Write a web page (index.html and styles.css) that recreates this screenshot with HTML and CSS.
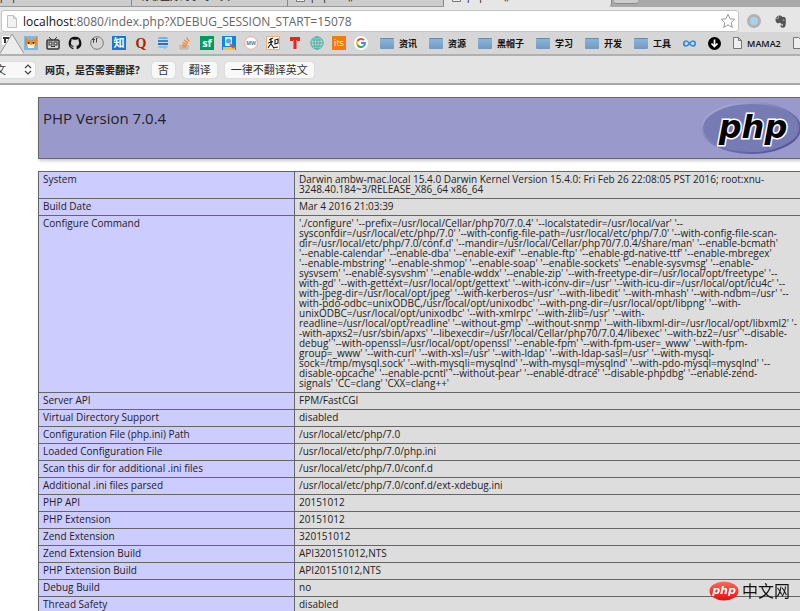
FILE: index.html
```html
<!doctype html>
<html lang="zh-CN">
<head>
    <meta charset="UTF-8">
    <meta name="viewport" content="width=device-width, initial-scale=1.0">
    <title>phpinfo()</title>
    <link rel="stylesheet" href="styles.css">
</head>
<body>
    <div class="browser">
        <div class="tabs">
            <div class="tab tab--first"><span>php</span></div>
            <div class="tab"><span>有哪些好的学习工具</span></div>
            <div class="tab">
                <svg width="9" height="12" viewBox="0 0 9 12"><path d="M.5.5h5l3 3v8h-8z" fill="#eee" stroke="#777"/></svg>
                <span>phpinfo()</span>
            </div>
            <div class="tab tab--active">
                <svg width="9" height="12" viewBox="0 0 9 12"><path d="M.5.5h5l3 3v8h-8z" fill="#eee" stroke="#777"/></svg>
                <span>phpinfo()</span>
            </div>
            <div class="tab--new"></div>
        </div>

        <div class="toolbar">
            <form class="address" action="">
                <svg width="10" height="13" viewBox="0 0 10 13"><path d="M.5.5h6l3 3v9h-9z" fill="#f2f2f2" stroke="#c0c0c0"/><path d="M6.500.5v3h3" fill="none" stroke="#c0c0c0"/></svg>
                <label for="url">localhost</label>
                <input type="text" id="url" value=":8080/index.php?XDEBUG_SESSION_START=15078">
                <svg width="16" height="16" viewBox="0 0 16 16"><path d="M8 1.300l2 4.500 4.900.5-3.700 3.300 1.100 4.800L8 11.900l-4.300 2.500 1.100-4.800L1.100 6.300 6 5.800z" fill="#fff" stroke="#999"/></svg>
            </form>
            <svg width="14" height="14" viewBox="0 0 14 14"><circle cx="7" cy="7" r="5.500" fill="#a4d3ee" stroke="#b2b2b2" stroke-width="3"/></svg>
            <svg width="12" height="13" viewBox="0 0 12 13"><path d="M3.500.5v3h-3C.3 5 .8 7.500 2 8c1.500.5 2.600.4 3-.5.3 1 1 1.300 2.300 1.400.7.3.7 1.100.7 1.800H6.500c0-.8.5-1 1-1-1.200-.5-2.200.3-2 1.600.2 1.100 1 1.400 2.300 1.400 2.200 0 2.700-1.200 2.900-3.500.3-2.700.3-5.200-.3-6.500C10 2 8.500 1.900 7.200 1.700 6.500.6 4.500.2 3.500.5z" fill="#555"/><path d="M.6 3L3 .8V3z" fill="#555"/><path d="M7.800 5.400c.7-.5 1.400-.3 1.500.3" fill="none" stroke="#ddd" stroke-width=".8"/></svg>
        </div>

        <div class="bookmarks">
            <div class="bookmarks__icons">
                <svg viewBox="0 0 14 14"><rect width="14" height="14" fill="#78b9e8"/><path d="M1 1l4 3h4l4-3v7l-3 4H4L1 8z" fill="#e98b2c"/><path d="M3 7l4 2 4-2-1 5H4z" fill="#fff3dd"/><circle cx="4.500" cy="7" r="1" fill="#333"/><circle cx="9.500" cy="7" r="1" fill="#333"/></svg>
                <svg viewBox="0 0 14 14" fill="none" stroke="#333"><rect x="1" y="4" width="12" height="9" rx="1" stroke-width="1.500"/><path d="M3 1l3 3M11 1L8 4M5 10.500h4"/><rect x="3" y="6" width="3" height="3"/><rect x="8" y="6" width="3" height="3"/></svg>
                <svg viewBox="0 0 16 16"><path d="M8 .8a7.300 7.300 0 0 0-2.300 14.200c.4.1.5-.2.5-.4v-1.300c-2 .4-2.500-.9-2.500-.9-.3-.8-.8-1.100-.8-1.100-.7-.4 0-.4 0-.4.7 0 1.100.7 1.100.7.700 1.100 1.700.8 2.200.6 0-.5.2-.8.4-1-1.600-.2-3.300-.8-3.300-3.600 0-.8.3-1.500.8-2-.1-.2-.4-1 0-2 0 0 .7-.2 2.100.8a7 7 0 0 1 3.700 0c1.400-1 2.100-.8 2.100-.8.4 1 .1 1.800 0 2 .5.5.8 1.200.8 2 0 2.800-1.700 3.400-3.300 3.600.2.200.4.700.4 1.400v2c0 .2.1.5.5.4A7.300 7.300 0 0 0 8 .8z" fill="#111"/></svg>
                <svg viewBox="0 0 14 14" fill="none" stroke="#777"><circle cx="7" cy="7" r="6.300"/><path d="M2 3.500h3M3.500 2v5M6 2.500h1.500M6.500 2.500v4" stroke="#444"/></svg>
                <svg viewBox="0 0 14 14"><rect width="14" height="14" fill="#1478d8"/><text x="7" y="11" font-size="11" font-weight="700" text-anchor="middle" fill="#fff">知</text></svg>
                <svg viewBox="0 0 14 14"><text class="quora" x="7" y="12" font-size="14" font-weight="700" text-anchor="middle" fill="#a82400">Q</text></svg>
                <svg viewBox="0 0 14 14"><path d="M2 3q0-2 2-2h6q2 0 2 2z" fill="#6fb4e4"/><path d="M2 4h10v2H2z" fill="#3a86cc"/><path d="M2 7h10v2H2z" fill="#2a6fb8"/><path d="M2 10h10q0 2-2 2l-2 2v-2H4q-2 0-2-2z" fill="#92bde0"/></svg>
                <svg viewBox="0 0 14 14" fill="none"><path d="M2 9v4h8V9" stroke="#aaa"/><path d="M3.500 11h5M3.700 9l5 .6M4.500 6.500l4.600 1.800M6 4l4 3M8.500 1.500l2.800 4.200" stroke="#f08a3c" stroke-width="1.300"/></svg>
                <svg viewBox="0 0 14 14"><rect width="14" height="14" fill="#009a61"/><text x="7" y="11" font-size="11" font-weight="700" text-anchor="middle" fill="#fff">sf</text></svg>
                <svg viewBox="0 0 14 14"><rect width="14" height="14" fill="#1383e0"/><path d="M1 14v-3h12v3z" fill="#f3c62b"/><rect x="3" y="1" width="7" height="9" fill="#d9f0ff"/><circle cx="6.500" cy="5" r="2.500" fill="#4aa8ee"/><path d="M8 8l4 4" fill="none" stroke="#e24b36" stroke-width="2"/></svg>
                <svg viewBox="0 0 14 14"><circle cx="7" cy="7" r="6.300" fill="#fff" stroke="#ecaaa6"/><text x="7" y="9" font-size="5" font-weight="700" text-anchor="middle" fill="#58789c">MW</text></svg>
                <svg viewBox="0 0 14 14"><rect x=".5" y=".5" width="13" height="13" fill="#fff" stroke="#f0ad7c"/><path d="M3 4l4-2M5 2v5M2 7l5-1.500M2 12l4-6M5 8l3 4M9 4l3-1v4l-3 1zM7 12l5-1" fill="none" stroke="#222" stroke-width="1.200"/></svg>
                <svg viewBox="0 0 14 14"><path d="M2 1h10v4H9V4H8.500v9h-3V4H5v1H2z" fill="#e8251c"/></svg>
                <svg viewBox="0 0 14 14" fill="none" stroke="#3fb0a0"><circle cx="7" cy="7" r="6.200"/><ellipse cx="7" cy="7" rx="3" ry="6.200"/><path d="M7 1v12M1 7h12M2 4h10M2 10h10"/></svg>
                <svg viewBox="0 0 14 14"><rect width="14" height="14" fill="#ee7d0e"/><text x="7" y="10" font-size="9" text-anchor="middle" fill="#fff">its</text></svg>
                <svg viewBox="0 0 14 14" fill="none" stroke-width="1.900"><circle cx="7" cy="7" r="7" fill="#fff"/><path d="M10 4.200A4 4 0 0 0 3.500 5" stroke="#ea4335"/><path d="M3.500 5a4 4 0 0 0 0 4" stroke="#fbbc05"/><path d="M3.500 9a4 4 0 0 0 6 1.200" stroke="#34a853"/><path d="M9.500 10.200A4 4 0 0 0 11 7H7" stroke="#4285f4"/></svg>
            </div>
            <a class="bookmark" href="#"><i class="folder"></i>资讯</a>
            <a class="bookmark" href="#"><i class="folder"></i>资源</a>
            <a class="bookmark" href="#"><i class="folder"></i>黑帽子</a>
            <a class="bookmark" href="#"><i class="folder"></i>学习</a>
            <a class="bookmark" href="#"><i class="folder"></i>开发</a>
            <a class="bookmark" href="#"><i class="folder"></i>工具</a>
            <svg width="13" height="13" viewBox="0 0 13 13" fill="none" stroke="#3b8ad4" stroke-width="1.700"><path d="M6.500 6.500C5 4.500 4.300 4 3.300 4a2.500 2.500 0 0 0 0 5c1 0 1.700-.5 3.200-2.500S8.700 4 9.700 4a2.500 2.500 0 0 1 0 5c-1 0-1.700-.5-3.200-2.500z"/></svg>
            <svg width="13" height="13" viewBox="0 0 13 13"><circle cx="6.500" cy="6.500" r="6.500" fill="#000"/><path d="M6.500 2.500v7M3.500 6.500l3 3 3-3" fill="none" stroke="#fff" stroke-width="1.700"/></svg>
            <a class="bookmark" href="#"><svg width="9" height="12" viewBox="0 0 9 12"><path d="M.5.5h5l3 3v8h-8zM5.500.5v3h3" fill="#eee" stroke="#777"/></svg>MAMA2</a>
            <svg width="9" height="12" viewBox="0 0 9 12"><path d="M.5.5h5l3 3v8h-8z" fill="#eee" stroke="#777"/></svg>
            <svg class="notch" width="24" height="22" viewBox="0 0 24 22"><path d="M2 3h9v9H2z" fill="#fff"/><path d="M3 5h7M5 5v5" stroke="#333" stroke-width="2"/><path d="M0 21L12 1l12 20v1H0z" fill="#ececec"/><path d="M0 20.500L12 1l12 19.500" fill="none" stroke="#999"/></svg>
        </div>

        <form class="translate" action="">
            <div class="translate__lang">
                <select aria-label="语言"><option>英文</option></select>
                <svg width="8" height="11" viewBox="0 0 8 11"><path d="M1 4l3-3 3 3M1 7l3 3 3-3" fill="none" stroke="#444" stroke-width="1.200"/></svg>
            </div>
            <strong>网页，是否需要翻译?</strong>
            <button type="button">否</button>
            <button type="button">翻译</button>
            <button type="button">一律不翻译英文</button>
        </form>
    </div>

    <main class="phpinfo">
        <header class="version">
            <h1>PHP Version 7.0.4</h1>
            <svg class="version__logo" width="102" height="54" viewBox="0 0 102 54">
                <defs>
                    <linearGradient id="rim" x1="0" y1="0" x2="1" y2="1">
                        <stop offset="0" stop-color="#b4b6da"/>
                        <stop offset=".5" stop-color="#777bb3"/>
                        <stop offset="1" stop-color="#44478c"/>
                    </linearGradient>
                </defs>
                <ellipse cx="51" cy="27" rx="49" ry="25" fill="#777bb3" stroke="url(#rim)" stroke-width="2"/>
                <text x="53" y="37" text-anchor="middle">php</text>
            </svg>
        </header>

        <table>
            <tr><th>System</th><td>Darwin ambw-mac.local 15.4.0 Darwin Kernel Version 15.4.0: Fri Feb 26 22:08:05 PST 2016; root:xnu-<br>3248.40.184~3/RELEASE_X86_64 x86_64</td></tr>
            <tr><th>Build Date</th><td>Mar 4 2016 21:03:39</td></tr>
            <tr><th>Configure Command</th><td>'./configure' '--prefix=/usr/local/Cellar/php70/7.0.4' '--localstatedir=/usr/local/var' '--<br>
                sysconfdir=/usr/local/etc/php/7.0' '--with-config-file-path=/usr/local/etc/php/7.0' '--with-config-file-scan-<br>
                dir=/usr/local/etc/php/7.0/conf.d' '--mandir=/usr/local/Cellar/php70/7.0.4/share/man' '--enable-bcmath'<br>
                '--enable-calendar' '--enable-dba' '--enable-exif' '--enable-ftp' '--enable-gd-native-ttf' '--enable-mbregex'<br>
                '--enable-mbstring' '--enable-shmop' '--enable-soap' '--enable-sockets' '--enable-sysvmsg' '--enable-<br>
                sysvsem' '--enable-sysvshm' '--enable-wddx' '--enable-zip' '--with-freetype-dir=/usr/local/opt/freetype' '--<br>
                with-gd' '--with-gettext=/usr/local/opt/gettext' '--with-iconv-dir=/usr' '--with-icu-dir=/usr/local/opt/icu4c' '--<br>
                with-jpeg-dir=/usr/local/opt/jpeg' '--with-kerberos=/usr' '--with-libedit' '--with-mhash' '--with-ndbm=/usr' '--<br>
                with-pdo-odbc=unixODBC,/usr/local/opt/unixodbc' '--with-png-dir=/usr/local/opt/libpng' '--with-<br>
                unixODBC=/usr/local/opt/unixodbc' '--with-xmlrpc' '--with-zlib=/usr' '--with-<br>
                readline=/usr/local/opt/readline' '--without-gmp' '--without-snmp' '--with-libxml-dir=/usr/local/opt/libxml2' '-<br>
                -with-apxs2=/usr/sbin/apxs' '--libexecdir=/usr/local/Cellar/php70/7.0.4/libexec' '--with-bz2=/usr' '--disable-<br>
                debug' '--with-openssl=/usr/local/opt/openssl' '--enable-fpm' '--with-fpm-user=_www' '--with-fpm-<br>
                group=_www' '--with-curl' '--with-xsl=/usr' '--with-ldap' '--with-ldap-sasl=/usr' '--with-mysql-<br>
                sock=/tmp/mysql.sock' '--with-mysqli=mysqlnd' '--with-mysql=mysqlnd' '--with-pdo-mysql=mysqlnd' '--<br>
                disable-opcache' '--enable-pcntl' '--without-pear' '--enable-dtrace' '--disable-phpdbg' '--enable-zend-<br>
                signals' 'CC=clang' 'CXX=clang++'</td></tr>
            <tr><th>Server API</th><td>FPM/FastCGI</td></tr>
            <tr><th>Virtual Directory Support</th><td>disabled</td></tr>
            <tr><th>Configuration File (php.ini) Path</th><td>/usr/local/etc/php/7.0</td></tr>
            <tr><th>Loaded Configuration File</th><td>/usr/local/etc/php/7.0/php.ini</td></tr>
            <tr><th>Scan this dir for additional .ini files</th><td>/usr/local/etc/php/7.0/conf.d</td></tr>
            <tr><th>Additional .ini files parsed</th><td>/usr/local/etc/php/7.0/conf.d/ext-xdebug.ini</td></tr>
            <tr><th>PHP API</th><td>20151012</td></tr>
            <tr><th>PHP Extension</th><td>20151012</td></tr>
            <tr><th>Zend Extension</th><td>320151012</td></tr>
            <tr><th>Zend Extension Build</th><td>API320151012,NTS</td></tr>
            <tr><th>PHP Extension Build</th><td>API20151012,NTS</td></tr>
            <tr><th>Debug Build</th><td>no</td></tr>
            <tr><th>Thread Safety</th><td>disabled</td></tr>
        </table>
    </main>

    <div class="watermark">
        <svg width="30" height="20" viewBox="0 0 30 20">
            <defs>
                <linearGradient id="red" x1="0" y1="0" x2="0" y2="1">
                    <stop offset="0" stop-color="#ff6a5c"/>
                    <stop offset="1" stop-color="#e80d0d"/>
                </linearGradient>
            </defs>
            <ellipse cx="15" cy="10" rx="14.500" ry="9.500" fill="url(#red)"/>
            <text x="15" y="13" text-anchor="middle">php</text>
        </svg>
        <span>中文网</span>
    </div>
</body>
</html>
```
FILE: styles.css
```css
body {
    margin: 0;
    height: 100vh;
    overflow: hidden;
    background-color: #fff;
    color: #222;
    font-family: "Open Sans", "Noto Sans CJK SC", sans-serif;
}

svg {
    display: block;
    flex-shrink: 0;
}

/* browser */
.browser {
    background-color: #dcdcdc;
    border-bottom: 2px solid #a9a9a9;
}

.tabs {
    display: flex;
    height: 7px;
    background-color: #a9a9a9;
    overflow: hidden;
}

.tab {
    display: flex;
    align-items: flex-end;
    gap: 6px;
    box-sizing: border-box;
    width: 156px;
    padding: 0 0 4px 8px;
    background-color: #cdcdcd;
    border-right: 1px solid #888;
    border-bottom: 1px solid #999;
    font-size: 10px;
    line-height: 12px;
    white-space: nowrap;
}

.tab--first {
    width: 132px;
    padding-left: 0;
}

.tab--active {
    width: 168px;
    background-color: #e6e6e6;
    border-bottom-color: #e6e6e6;
    border-bottom-right-radius: 4px;
}

.tab--new {
    width: 24px;
    height: 3px;
    margin-left: 2px;
    background-color: #cdcdcd;
    border-bottom: 1px solid #888;
    border-radius: 0 0 3px 3px;
}

.toolbar {
    display: flex;
    align-items: center;
    gap: 14px;
    padding: 3px 13px 0 1px;
    background-color: #e6e6e6;
}

.address {
    display: flex;
    flex: 1;
    align-items: center;
    box-sizing: border-box;
    height: 22px;
    margin-right: -6px;
    padding: 0 2px 0 5px;
    background-color: #fff;
    border: 1px solid #c4c4c4;
    border-radius: 3px;
    font-size: 12px;
}

.address label {
    margin-left: 6px;
    color: #111;
}

.address input {
    flex: 1;
    min-width: 0;
    padding: 0;
    border: 0;
    outline: 0;
    background: none;
    color: #666;
    font: inherit;
}

.bookmarks {
    position: relative;
    display: flex;
    align-items: center;
    height: 22px;
    gap: 12px;
    padding-left: 24px;
    background-color: #d6d6d6;
    border-bottom: 2px solid #b0b0b0;
    font-size: 9px;
    white-space: nowrap;
    overflow: hidden;
}

.bookmarks__icons {
    display: flex;
    flex-shrink: 0;
    justify-content: space-between;
    width: 344px;
}

.bookmarks__icons svg {
    width: 14px;
    height: 14px;
}

.quora {
    font-family: "Liberation Serif", serif;
}

.bookmark {
    display: flex;
    flex-shrink: 0;
    align-items: center;
    gap: 5px;
    color: #111;
    font-weight: 600;
    text-decoration: none;
}

.folder {
    width: 14px;
    height: 10px;
    background: linear-gradient(#8db4d8, #6d9ac4);
    border-top: 1px solid #5f8cb5;
    border-radius: 1px;
}

.notch {
    position: absolute;
    left: 0;
    bottom: -1px;
}

.translate {
    display: flex;
    align-items: center;
    gap: 8px;
    height: 27px;
    background-color: #e4e4e4;
    overflow: hidden;
    font-size: 10px;
}

.translate strong {
    margin: 0 4px 0 2px;
    color: #222;
}

.translate button,
.translate__lang {
    box-sizing: border-box;
    height: 16px;
    padding: 0 6px;
    background-color: #f8f8f8;
    border: 0;
    border-radius: 3px;
    box-shadow: 0 0 1px #aaa;
    color: #333;
    font-family: inherit;
    font-size: 11px;
    line-height: 16px;
}

.translate__lang {
    display: flex;
    align-items: center;
    justify-content: space-between;
    width: 51px;
    margin-left: -16px;
    padding: 0 3px 0 0;
}

.translate__lang select {
    appearance: none;
    padding: 0;
    background: none;
    border: 0;
    color: inherit;
    font: inherit;
}

/* phpinfo */
.phpinfo {
    margin: 12px -4px 0 38px;
    font-size: 10px;
    line-height: 10px;
}

.version {
    display: flex;
    justify-content: space-between;
    height: 60px;
    margin-bottom: 12px;
    padding: 0 1px 0 4px;
    background-color: #9999cc;
    border: 1px solid #666;
    box-shadow: 1px 2px 3px #ccc;
}

.version h1 {
    margin: 10px 0 0;
    font-size: 15px;
    font-weight: 400;
    line-height: 20px;
}

.version__logo {
    margin-top: 3px;
}

.version__logo text {
    font: italic 700 32px "DejaVu Sans", sans-serif;
    fill: #000;
    stroke: #fff;
    stroke-width: 3px;
    paint-order: stroke;
}

table {
    width: 100%;
    border-collapse: collapse;
    table-layout: fixed;
    box-shadow: 1px 2px 3px #ccc;
}

th,
td {
    padding: 2px 4px 4px;
    border: 1px solid #666;
    font-weight: 400;
    text-align: left;
    vertical-align: top;
    white-space: nowrap;
}

th {
    width: 247px;
    background-color: #ccccff;
}

td {
    background-color: #ddd;
}

.watermark {
    position: fixed;
    right: 10px;
    bottom: 10px;
    display: flex;
    align-items: center;
    gap: 3px;
    color: #111;
    font-size: 16px;
    line-height: 20px;
}

.watermark text {
    font: italic 700 11px "DejaVu Sans", sans-serif;
    fill: #fff;
}
```
